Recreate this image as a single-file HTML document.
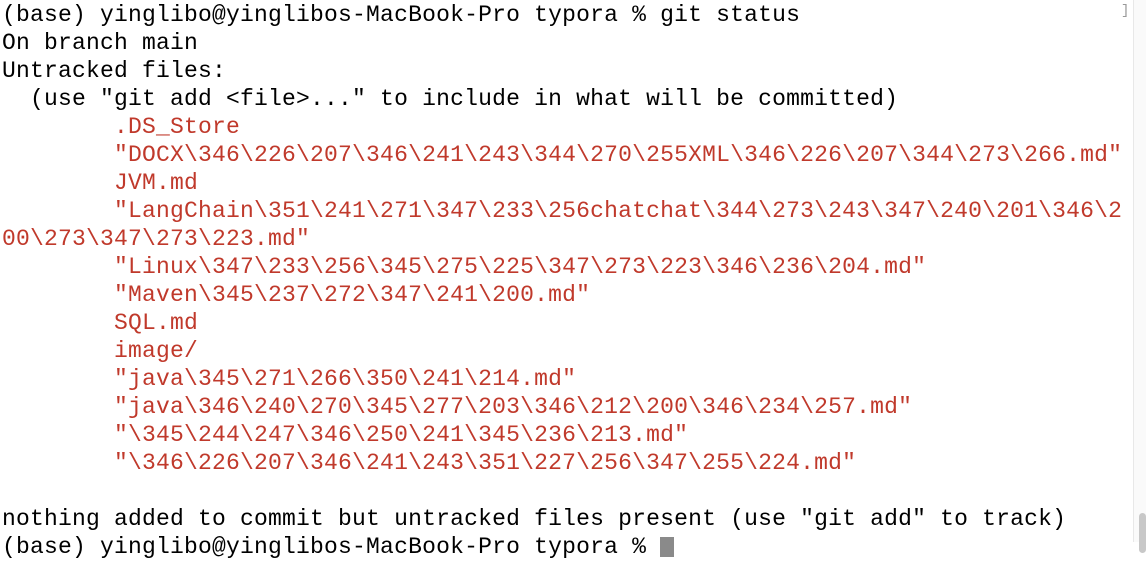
<!DOCTYPE html>
<html><head><style>
html,body{margin:0;padding:0;background:#fff;width:1146px;height:542px;overflow:hidden}
pre{margin:0;position:absolute;left:2px;top:1px;font-family:"Liberation Mono",monospace;font-size:23px;letter-spacing:0.2px;line-height:28px;color:#000}
.r{color:#c0392b}
.cur{display:inline-block;width:14px;height:20px;background:#8a8a8a;vertical-align:-4px}
.sb{position:absolute;left:1133px;top:0;width:13px;height:542px;background:#fafafa;border-left:1px solid #e8e8e8}
.th{position:absolute;left:1139px;top:513px;width:7px;height:40px;background:#c8c8c8;border-radius:4px}
.br{position:absolute;left:1121px;top:3px;font-family:"Liberation Mono",monospace;font-size:14px;color:#999}
</style></head><body>
<pre>(base) yinglibo@yinglibos-MacBook-Pro typora % git status
On branch main
Untracked files:
  (use "git add &lt;file&gt;..." to include in what will be committed)
<span class="r">        .DS_Store
        "DOCX\346\226\207\346\241\243\344\270\255XML\346\226\207\344\273\266.md"
        JVM.md
        "LangChain\351\241\271\347\233\256chatchat\344\273\243\347\240\201\346\2
00\273\347\273\223.md"
        "Linux\347\233\256\345\275\225\347\273\223\346\236\204.md"
        "Maven\345\237\272\347\241\200.md"
        SQL.md
        image/
        "java\345\271\266\350\241\214.md"
        "java\346\240\270\345\277\203\346\212\200\346\234\257.md"
        "\345\244\247\346\250\241\345\236\213.md"
        "\346\226\207\346\241\243\351\227\256\347\255\224.md"</span>

nothing added to commit but untracked files present (use "git add" to track)
(base) yinglibo@yinglibos-MacBook-Pro typora % <span class="cur"></span></pre>
<div class="sb"></div><div class="th"></div>
<div class="br">]</div>
</body></html>
